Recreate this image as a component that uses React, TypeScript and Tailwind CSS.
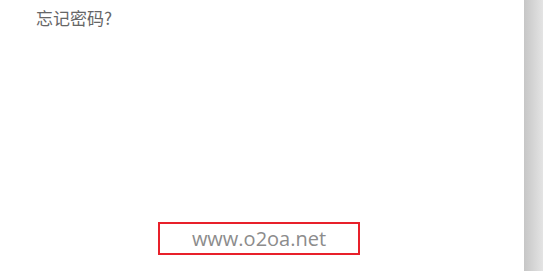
import React from 'react';

export default function App() {
  return (
    <div className="flex h-[271px] w-[543px] overflow-hidden bg-white">
      <div className="flex w-[524px] flex-col bg-white">
        <div
          className="pl-[36px] pt-[7px] text-[17px] leading-[22px] text-[#666666]"
          style={{ fontFamily: '"Microsoft YaHei", "Noto Sans CJK SC", sans-serif' }}
        >
          忘记密码?
        </div>
        <div className="flex flex-1 items-end justify-center pb-[16px] pr-[6px]">
          <div
            className="flex h-[33px] w-[202px] items-center justify-center border-2 border-[#e8202a] text-[20px] text-[#8c8c8c]"
            style={{ fontFamily: '"Open Sans", "Noto Sans", sans-serif' }}
          >
            www.o2oa.net
          </div>
        </div>
      </div>
      <div className="flex-1 bg-gradient-to-r from-[#c6c6c6] to-[#e4e4e4]" />
    </div>
  );
}
